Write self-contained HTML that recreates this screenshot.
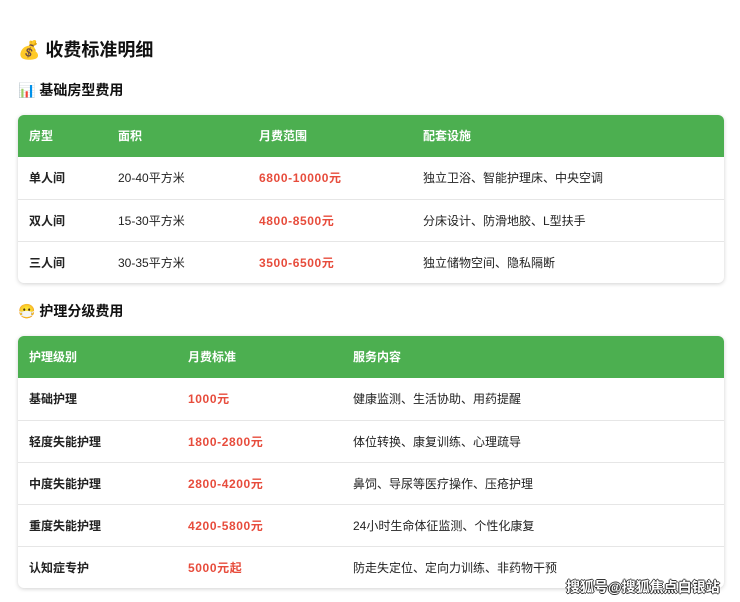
<!DOCTYPE html>
<html><head><meta charset="utf-8"><style>
body{margin:0;background:#fff;width:740px;height:602px;overflow:hidden;font-family:"Liberation Sans","Noto Sans CJK SC",sans-serif;color:#222;position:relative}
.h1{position:absolute;left:18px;top:36px;font-size:18px;font-weight:bold;color:#111}
.h2{position:absolute;left:18px;font-size:14px;font-weight:bold;color:#111}
.tbl{position:absolute;left:18px;width:706px;border-radius:6px;overflow:hidden;box-shadow:0 1px 4px rgba(0,0,0,.18);background:#fff}
.row{position:relative;height:42px;border-top:1px solid #e6e6e6;box-sizing:border-box;font-size:12px}
.row span{position:absolute;top:0;line-height:42px}
.hd{background:#4caf50;color:#fff;font-weight:bold;border-top:none;height:42px}
.b{font-weight:bold;color:#222}
.r{color:#e74c3c;font-weight:bold;letter-spacing:0.6px}
.wm{position:absolute;left:566px;top:577px;font-size:14px;color:#fff;font-weight:bold;text-shadow:-1px 0 #333,1px 0 #333,0 -1px #333,0 1px #333}
</style></head><body>
<div class="h1">💰 收费标准明细</div>
<div class="h2" style="top:80px">📊 基础房型费用</div>
<div class="tbl" style="top:115px">
<div class="row hd"><span style="left:11px">房型</span><span style="left:100px">面积</span><span style="left:241px">月费范围</span><span style="left:405px">配套设施</span></div>
<div class="row" style="border-top:none"><span class="b" style="left:11px">单人间</span><span style="left:100px">20-40平方米</span><span class="r" style="left:241px">6800-10000元</span><span style="left:405px">独立卫浴、智能护理床、中央空调</span></div>
<div class="row"><span class="b" style="left:11px">双人间</span><span style="left:100px">15-30平方米</span><span class="r" style="left:241px">4800-8500元</span><span style="left:405px">分床设计、防滑地胶、L型扶手</span></div>
<div class="row"><span class="b" style="left:11px">三人间</span><span style="left:100px">30-35平方米</span><span class="r" style="left:241px">3500-6500元</span><span style="left:405px">独立储物空间、隐私隔断</span></div>
</div>
<div class="h2" style="top:301px">😷 护理分级费用</div>
<div class="tbl" style="top:336px">
<div class="row hd"><span style="left:11px">护理级别</span><span style="left:170px">月费标准</span><span style="left:335px">服务内容</span></div>
<div class="row" style="border-top:none"><span class="b" style="left:11px">基础护理</span><span class="r" style="left:170px">1000元</span><span style="left:335px">健康监测、生活协助、用药提醒</span></div>
<div class="row"><span class="b" style="left:11px">轻度失能护理</span><span class="r" style="left:170px">1800-2800元</span><span style="left:335px">体位转换、康复训练、心理疏导</span></div>
<div class="row"><span class="b" style="left:11px">中度失能护理</span><span class="r" style="left:170px">2800-4200元</span><span style="left:335px">鼻饲、导尿等医疗操作、压疮护理</span></div>
<div class="row"><span class="b" style="left:11px">重度失能护理</span><span class="r" style="left:170px">4200-5800元</span><span style="left:335px">24小时生命体征监测、个性化康复</span></div>
<div class="row"><span class="b" style="left:11px">认知症专护</span><span class="r" style="left:170px">5000元起</span><span style="left:335px">防走失定位、定向力训练、非药物干预</span></div>
</div>
<div class="wm">搜狐号@搜狐焦点白银站</div>
</body></html>
